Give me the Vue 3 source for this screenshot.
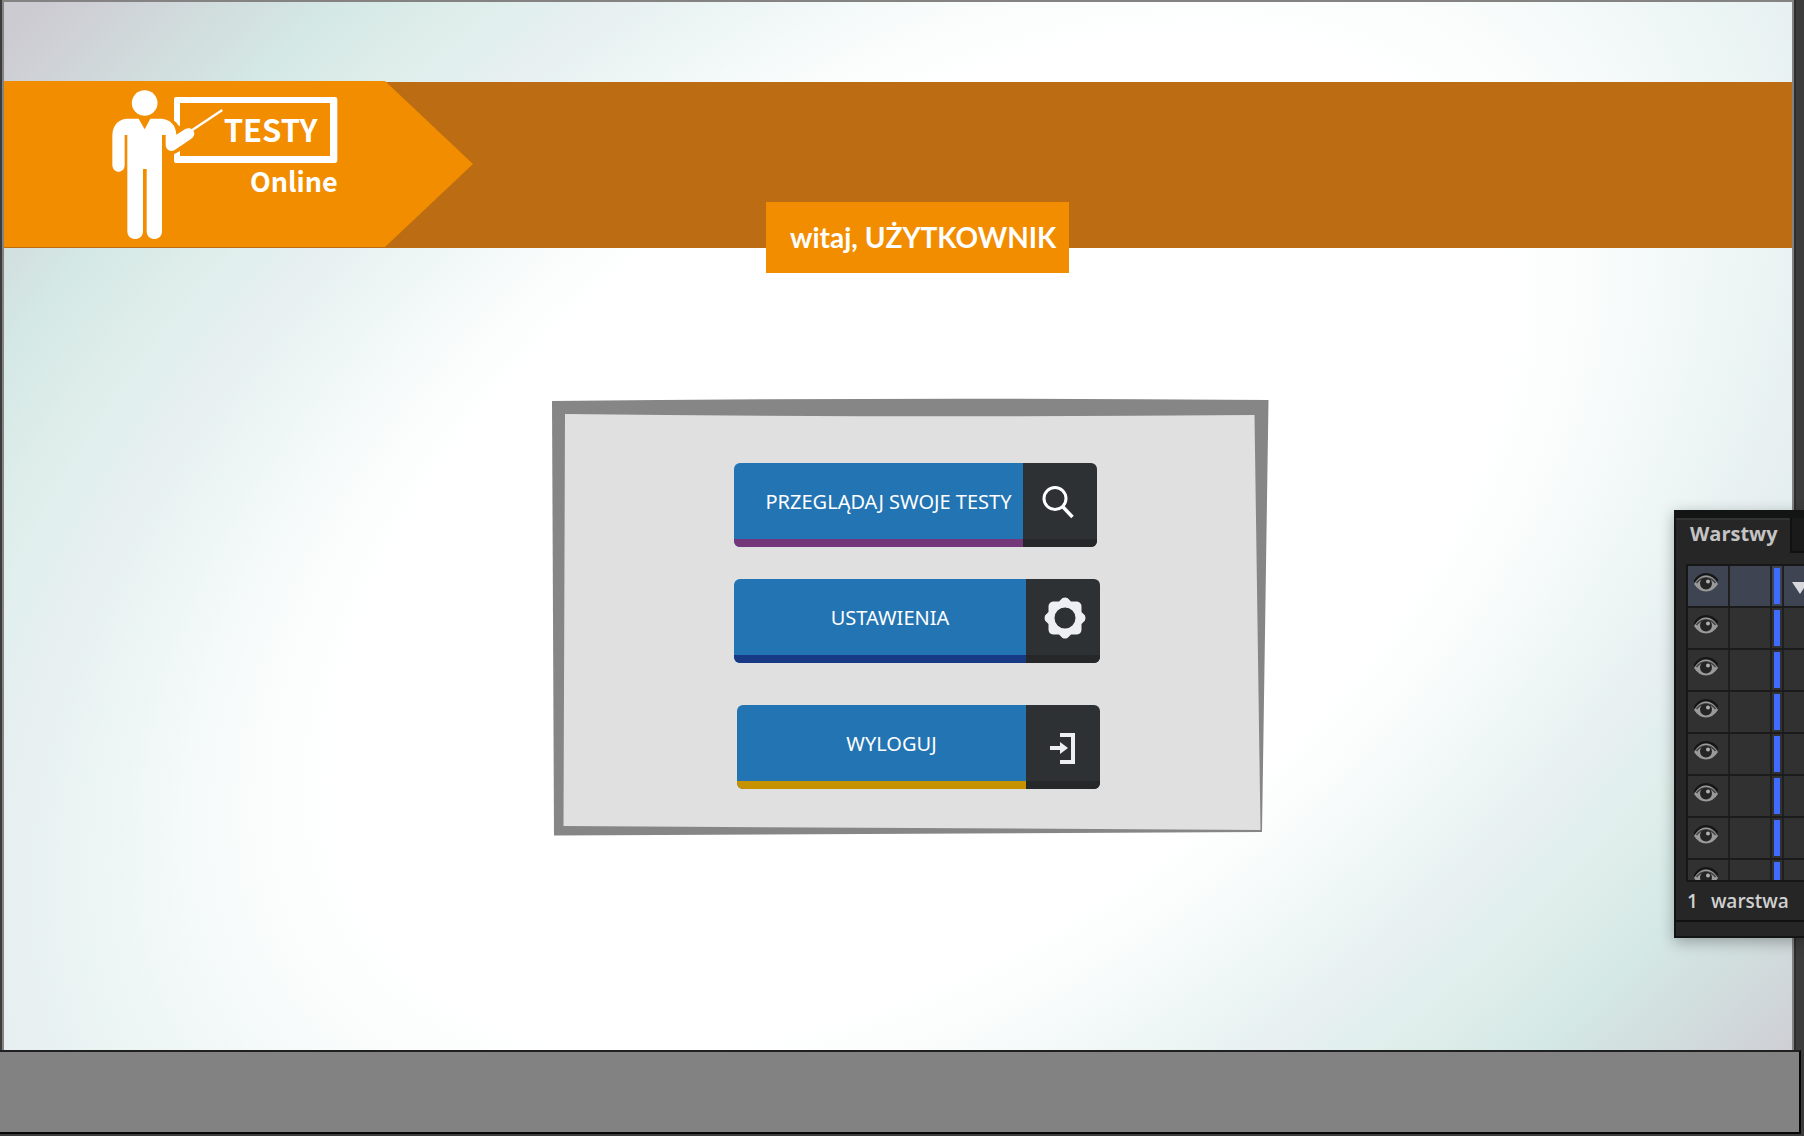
<script setup>
const actions = [
  { id: 'browse', label: 'PRZEGLĄDAJ SWOJE TESTY', accent: 'plum' },
  { id: 'settings', label: 'USTAWIENIA', accent: 'navy' },
  { id: 'logout', label: 'WYLOGUJ', accent: 'gold' },
]
const layers = [1, 2, 3, 4, 5, 6, 7, 8]
</script>

<template>
  <div class="workspace">
    <main class="artboard">
      <svg class="backdrop" viewBox="0 0 1788 1048" preserveAspectRatio="none" aria-hidden="true">
        <defs>
          <radialGradient id="glow" gradientUnits="userSpaceOnUse" cx="0" cy="0" r="1"
            gradientTransform="translate(918 538) rotate(-36) scale(1735 1024)">
            <stop offset="0.38" stop-color="#ffffff" />
            <stop offset="0.43" stop-color="#fafdfc" />
            <stop offset="0.485" stop-color="#f4f9f9" />
            <stop offset="0.55" stop-color="#ebf5f3" />
            <stop offset="0.604" stop-color="#e7eff1" />
            <stop offset="0.64" stop-color="#e2efef" />
            <stop offset="0.68" stop-color="#dfeeea" />
            <stop offset="0.765" stop-color="#d4e8e5" />
            <stop offset="0.957" stop-color="#cdcbd2" />
          </radialGradient>
        </defs>
        <rect width="1788" height="1048" fill="url(#glow)" />
      </svg>

      <header class="banner">
        <div class="flag">
          <svg class="logo" viewBox="336 264 678 456" role="img" aria-label="Testy Online">
            <g fill="#fff">
              <circle cx="434" cy="309" r="38.500" />
              <path d="M416 356 L434 388 L451 356 H485 C510 358 528 375 529 404 L556 387 C568 381 582 388 583 400 C583 407 580 412 573 417 L524 450 C511 457 498 450 497 436 V405 H486 V695 C484 724 442 724 440 695 V507 H429 V695 C427 724 384 724 382 695 V405 H374 V496 C373 522 339 522 337 496 V404 C339 373 357 357 382 356 Z" />
              <path d="M522 297 Q522 291 528 291 H1005 Q1012 291 1012 298 V481 Q1012 489 1004 489 H530 Q522 489 522 482 V463 L540 453 V468 H990 V309 H540 V379 L534 375 Q530 366 522 362 Z" />
            </g>
            <path d="M576 391 L667 330" stroke="#fff" stroke-width="7" fill="none" />
            <text class="logo-text" x="671" y="427" font-size="93">TESTY</text>
            <text class="logo-text" x="750" y="576" font-size="81">Online</text>
          </svg>
        </div>
        <p class="greeting">witaj, UŻYTKOWNIK</p>
      </header>

      <section class="stage">
        <div class="board">
          <svg class="frame" viewBox="0 0 717 438" preserveAspectRatio="none" aria-hidden="true">
            <path fill="#868686" d="M0 3 Q360 -1 716.500 2 L710 434 L2 437.500 Z" />
            <path fill="#e0e0e0" d="M13 16 Q360 20 702.500 17 L708.500 432 L11.500 428 Z" />
          </svg>
          <nav class="actions">
            <button v-for="a in actions" :key="a.id" type="button" class="action" :class="a.accent">
              <span class="label">{{ a.label }}</span>
              <span class="icon">
                <svg v-if="a.id === 'browse'" viewBox="0 0 42 42" fill="none" stroke="#fff">
                  <circle cx="14" cy="17.500" r="11" stroke-width="3" />
                  <path d="M21.500 25.500 L31.500 36" stroke-width="3.500" />
                </svg>
                <svg v-else-if="a.id === 'settings'" viewBox="0 0 42 42">
                  <path fill="#eeeff4" fill-rule="evenodd" d="M18.500 1 Q21 0 23.500 1 L27 4.500 H33 Q37 5 37.500 9 V15 L41 18.500 Q42 21 41 23.500 L37.500 27 V33 Q37 37 33 37.500 H27 L23.500 41 Q21 42 18.500 41 L15 37.500 H9 Q5 37 4.500 33 V27 L1 23.500 Q0 21 1 18.500 L4.500 15 V9 Q5 5 9 4.500 H15 Z M21 10.500 A10.500 10.500 0 1 0 21 31.500 A10.500 10.500 0 1 0 21 10.500 Z" />
                </svg>
                <svg v-else viewBox="0 0 42 42" fill="#eeeff4">
                  <path d="M6 23 H16 V19 L24 25 L16 31 V27 H6 Z" />
                  <path d="M16 10 H31 V41 H16 V37 H27 V14 H16 Z" />
                </svg>
              </span>
            </button>
          </nav>
        </div>
      </section>
    </main>

    <footer class="pasteboard"></footer>

    <aside class="palette">
      <div class="tabs">
        <h2 class="tab">Warstwy</h2>
        <span class="tab-rest"></span>
      </div>
      <ul class="layers">
        <li v-for="n in layers" :key="n" class="layer" :class="{ active: n === 1 }">
          <span class="cell">
            <svg viewBox="0 0 24 19" width="24" height="19" aria-hidden="true">
              <path d="M0 9 Q5 1 12 1 Q19 1 24 8" fill="none" stroke="#151515" stroke-width="2" />
              <path d="M0 11 Q5 2.500 12 2.500 Q19 2.500 24 11 Q19 18.500 12 18.500 Q5 18.500 0 11 Z" fill="#9a9a9a" />
              <path d="M2.500 10 Q6 5 12 5 Q18 5 21.500 10" fill="none" stroke="#444" stroke-width="1.500" />
              <circle cx="12" cy="10.500" r="6" fill="#252525" />
              <circle cx="14" cy="8.500" r="2" fill="#b0b0b0" />
            </svg>
          </span>
          <span class="cell"></span>
          <span class="mark"></span>
          <span class="name">
            <svg v-if="n === 1" viewBox="0 0 16 12" width="16" height="12" aria-hidden="true">
              <path d="M0 0 H16 L8 12 Z" fill="#d6d8dc" />
            </svg>
          </span>
        </li>
      </ul>
      <p class="count"><span>1</span><span>warstwa</span></p>
      <div class="grip"></div>
    </aside>
  </div>
</template>

<style>
body {
  margin: 0;
  background: #3c3c3c;
}
</style>

<style scoped>
.workspace {
  position: relative;
  display: flex;
  flex-direction: column;
  min-height: 100vh;
  overflow: hidden;
  font-family: "Open Sans", "Noto Sans", sans-serif;
  background: #3c3c3c;
}

.artboard {
  position: relative;
  flex: 1;
  display: flex;
  flex-direction: column;
  margin: 0 10px 0 2px;
  border: 2px solid #858282;
  border-bottom: 0;
  box-shadow: 2px 0 0 #2e2e2e;
}

.backdrop {
  position: absolute;
  width: 100%;
  height: 100%;
}

.banner {
  position: relative;
  margin-top: 80px;
  height: 166px;
  background: #bc6c12;
}

.flag {
  display: flex;
  align-items: flex-start;
  box-sizing: border-box;
  width: 469px;
  height: 166px;
  margin-top: -1px;
  padding: 7px 0 0 108px;
  background: #f28d00;
  clip-path: polygon(0 0, 381px 0, 100% 50%, 381px 100%, 0 100%);
}

.logo {
  width: 226px;
  height: 152px;
  overflow: visible;
}

.logo-text {
  font-family: "Noto Sans CJK SC", "Noto Sans CJK JP", sans-serif;
  font-weight: 700;
  fill: #fff;
}

.greeting {
  position: absolute;
  left: 50%;
  bottom: -25px;
  transform: translateX(-132px);
  box-sizing: border-box;
  width: 303px;
  margin: 0;
  padding-left: 24px;
  background: #f28d00;
  color: #fff;
  font: 700 28px/71px Lato, sans-serif;
  white-space: nowrap;
}

.stage {
  position: relative;
  display: flex;
  justify-content: center;
  padding: 150px 0 150px 24px;
}

.board {
  position: relative;
  box-sizing: border-box;
  width: 717px;
  min-height: 438px;
  padding: 65px 0 45px 14px;
}

.frame {
  position: absolute;
  inset: 0;
  width: 100%;
  height: 100%;
}

.actions {
  position: relative;
  display: flex;
  flex-direction: column;
  gap: 32px;
  width: 366px;
  margin: 0 auto;
}

.action {
  display: flex;
  width: 363px;
  height: 84px;
  padding: 0;
  border: 0;
  border-radius: 6px;
  overflow: hidden;
  background: none;
  color: #fff;
  font: 400 20px/24px "Noto Sans", sans-serif;
  cursor: pointer;
}

.action.navy {
  width: 100%;
}

.action.gold {
  align-self: flex-end;
  margin-top: 10px;
}

.label {
  flex: 1;
  display: flex;
  align-items: center;
  justify-content: center;
  box-sizing: border-box;
  padding: 2px 0 0 20px;
  border-bottom: 8px solid;
  background: #2374b3;
  white-space: nowrap;
}

.plum .label {
  border-color: #74387a;
}

.navy .label {
  border-color: #183a85;
}

.gold .label {
  border-color: #c69200;
}

.icon {
  display: flex;
  align-items: center;
  justify-content: center;
  box-sizing: border-box;
  width: 74px;
  padding: 2px 0 0 4px;
  border-bottom: 8px solid #262728;
  background: #2d3133;
}

.icon svg {
  width: 42px;
  height: 42px;
}

.pasteboard {
  position: relative;
  box-sizing: border-box;
  height: 84px;
  margin: 0 3px 2px 0;
  border: solid #060606;
  border-width: 2px 2px 2px 0;
  border-top-color: #202020;
  background: #828282;
}

.palette {
  position: absolute;
  top: 510px;
  right: 0;
  box-sizing: border-box;
  width: 130px;
  height: 428px;
  border: solid #131414;
  border-width: 8px 0 2px 2px;
  background: #262626;
  box-shadow: 0 4px 14px rgba(0, 0, 0, 0.3);
  color: #d0d0d0;
}

.tabs {
  display: flex;
  height: 46px;
}

.tab {
  box-sizing: border-box;
  width: 114px;
  margin: 0;
  padding-left: 14px;
  border-top: 2px solid #333;
  color: #c4c4c4;
  font: 700 20px/28px "Open Sans", sans-serif;
}

.tab-rest {
  flex: 1;
  height: 33px;
  border: solid #101010;
  border-width: 0 0 2px 2px;
  background: #1a1a1a;
}

.layers {
  height: 314px;
  margin: 0 0 0 10px;
  padding: 0;
  border: solid #171717;
  border-width: 2px 0 2px 2px;
  overflow: hidden;
  list-style: none;
}

.layer {
  display: flex;
  height: 40px;
  border-bottom: 2px solid #1b1b1b;
  background: #313131;
}

.active {
  background: #3e4451;
}

.cell {
  flex: none;
  box-sizing: border-box;
  width: 42px;
  padding: 7px 0 0 6px;
  border-right: 2px solid #1f1f1f;
}

.mark {
  flex: none;
  width: 6px;
  padding: 0 2px;
  border-right: 2px solid #1f1f1f;
  background: linear-gradient(#3f6cff, #3f6cff) center / 6px 36px no-repeat;
}

.name {
  flex: none;
  padding: 16px 0 0 8px;
  line-height: 0;
}

.count {
  display: flex;
  gap: 13px;
  margin: 0;
  padding-left: 11px;
  border-bottom: 2px solid #101010;
  font: 600 19px/38px "Open Sans", sans-serif;
}

.grip {
  height: 14px;
}
</style>
